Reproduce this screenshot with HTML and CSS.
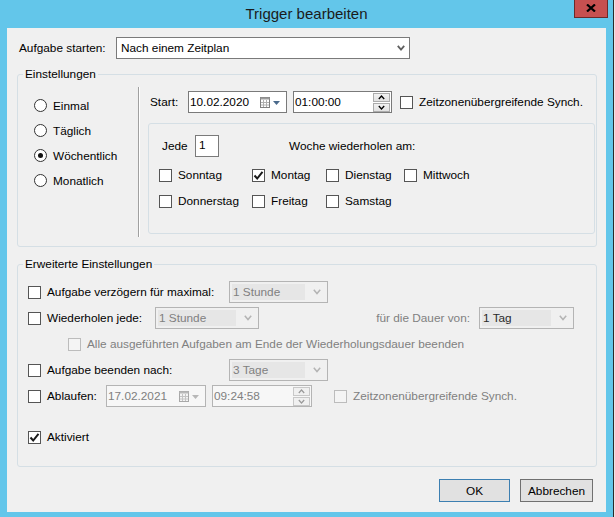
FILE: index.html
```html
<!DOCTYPE html>
<html lang="de">
<head>
    <meta charset="UTF-8">
    <meta name="viewport" content="width=device-width, initial-scale=1.0">
    <title>Trigger bearbeiten</title>
    <link rel="stylesheet" href="styles.css">
</head>
<body>
    <div class="window">
        <div class="titlebar">
            <span class="title">Trigger bearbeiten</span>
            <div class="close">
                <svg width="10" height="8" viewBox="0 0 10 8"><path d="M1 0.5 L9 7.5 M9 0.5 L1 7.5" stroke="#000" stroke-width="2.2"/></svg>
            </div>
        </div>

        <div class="client">
            <div class="top-row">
                <span class="top-label">Aufgabe starten:</span>
                <div class="select">
                    <span class="select-value">Nach einem Zeitplan</span>
                    <svg width="8" height="6" viewBox="0 0 8 6"><path d="M0.8 0.8 L4 4.6 L7.2 0.8" stroke="#606060" stroke-width="1.8" fill="none"/></svg>
                </div>
            </div>

            <fieldset class="group settings">
                <legend>Einstellungen</legend>
                <div class="settings-body">
                    <div class="freq">
                        <div class="radio"><span class="circle"></span>Einmal</div>
                        <div class="radio"><span class="circle"></span>Täglich</div>
                        <div class="radio"><span class="circle on"></span>Wöchentlich</div>
                        <div class="radio"><span class="circle"></span>Monatlich</div>
                    </div>
                    <div class="sep"></div>
                    <div class="schedule">
                        <div class="start-line">
                            <span class="start-text">Start:</span>
                            <div class="datebox">
                                <span class="field-value">10.02.2020</span>
                                <svg class="cal" width="21" height="11" viewBox="0 0 21 11">
                                    <rect x="0.5" y="0.5" width="9" height="10" fill="#fff" stroke="#808080"/>
                                    <rect x="0.5" y="0.5" width="9" height="2" fill="#9a9a9a"/>
                                    <path d="M3.5 3 V10 M6.5 3 V10 M1 5.5 H9 M1 8 H9" stroke="#b0b0b0"/>
                                    <path d="M13 4 H20 L16.5 8 Z" fill="#4a6a8c"/>
                                </svg>
                            </div>
                            <div class="timebox">
                                <span class="field-value">01:00:00</span>
                                <div class="spin">
                                    <span class="spin-btn"><svg width="7" height="5" viewBox="0 0 7 5"><path d="M0.8 4 L3.5 1 L6.2 4" stroke="#000" stroke-width="1.3" fill="none"/></svg></span>
                                    <span class="spin-btn"><svg width="7" height="5" viewBox="0 0 7 5"><path d="M0.8 1 L3.5 4 L6.2 1" stroke="#000" stroke-width="1.3" fill="none"/></svg></span>
                                </div>
                            </div>
                            <div class="check sync"><span class="box"></span>Zeitzonenübergreifende Synch.</div>
                        </div>

                        <div class="weekly">
                            <div class="jede-row">
                                <span class="jede-text">Jede</span>
                                <div class="numbox">1</div>
                                <span class="woche-text">Woche wiederholen am:</span>
                            </div>
                            <div class="days">
                                <div class="check"><span class="box"></span>Sonntag</div>
                                <div class="check"><span class="box checked"><svg width="11" height="11" viewBox="0 0 11 11"><path d="M1.5 5.5 L4.2 8.5 L9.5 1.8" stroke="#1a1a1a" stroke-width="2" fill="none"/></svg></span>Montag</div>
                                <div class="check"><span class="box"></span>Dienstag</div>
                                <div class="check"><span class="box"></span>Mittwoch</div>
                                <div class="check"><span class="box"></span>Donnerstag</div>
                                <div class="check"><span class="box"></span>Freitag</div>
                                <div class="check"><span class="box"></span>Samstag</div>
                            </div>
                        </div>
                    </div>
                </div>
            </fieldset>

            <fieldset class="group advanced">
                <legend>Erweiterte Einstellungen</legend>
                <div class="adv-body">
                    <div class="adv-row">
                        <div class="check w-delay"><span class="box"></span>Aufgabe verzögern für maximal:</div>
                        <div class="combo w99">
                            <span class="combo-value">1 Stunde</span>
                            <svg width="8" height="6" viewBox="0 0 8 6"><path d="M0.8 0.8 L4 4.6 L7.2 0.8" stroke="#b4b4b4" stroke-width="1.5" fill="none"/></svg>
                        </div>
                    </div>
                    <div class="adv-row">
                        <div class="check w-repeat"><span class="box"></span>Wiederholen jede:</div>
                        <div class="combo w104">
                            <span class="combo-value">1 Stunde</span>
                            <svg width="8" height="6" viewBox="0 0 8 6"><path d="M0.8 0.8 L4 4.6 L7.2 0.8" stroke="#b4b4b4" stroke-width="1.5" fill="none"/></svg>
                        </div>
                        <span class="duration-text">für die Dauer von:</span>
                        <div class="combo w95">
                            <span class="combo-value dark">1 Tag</span>
                            <svg width="8" height="6" viewBox="0 0 8 6"><path d="M0.8 0.8 L4 4.6 L7.2 0.8" stroke="#b4b4b4" stroke-width="1.5" fill="none"/></svg>
                        </div>
                    </div>
                    <div class="adv-row">
                        <div class="check disabled indent"><span class="box"></span>Alle ausgeführten Aufgaben am Ende der Wiederholungsdauer beenden</div>
                    </div>
                    <div class="adv-row">
                        <div class="check w-delay"><span class="box"></span>Aufgabe beenden nach:</div>
                        <div class="combo w99">
                            <span class="combo-value">3 Tage</span>
                            <svg width="8" height="6" viewBox="0 0 8 6"><path d="M0.8 0.8 L4 4.6 L7.2 0.8" stroke="#b4b4b4" stroke-width="1.5" fill="none"/></svg>
                        </div>
                    </div>
                    <div class="adv-row">
                        <div class="check w-expire"><span class="box"></span>Ablaufen:</div>
                        <div class="datebox off">
                            <span class="field-value">17.02.2021</span>
                            <svg class="cal" width="21" height="11" viewBox="0 0 21 11">
                                <rect x="0.5" y="0.5" width="9" height="10" fill="#f4f4f4" stroke="#a8a8a8"/>
                                <rect x="0.5" y="0.5" width="9" height="2" fill="#b8b8b8"/>
                                <path d="M3.5 3 V10 M6.5 3 V10 M1 5.5 H9 M1 8 H9" stroke="#c4c4c4"/>
                                <path d="M13 4 H20 L16.5 8 Z" fill="#b8b8b8"/>
                            </svg>
                        </div>
                        <div class="timebox off">
                            <span class="field-value">09:24:58</span>
                            <div class="spin">
                                <span class="spin-btn"><svg width="7" height="5" viewBox="0 0 7 5"><path d="M0.8 4 L3.5 1 L6.2 4" stroke="#9a9a9a" stroke-width="1.2" fill="none"/></svg></span>
                                <span class="spin-btn"><svg width="7" height="5" viewBox="0 0 7 5"><path d="M0.8 1 L3.5 4 L6.2 1" stroke="#9a9a9a" stroke-width="1.2" fill="none"/></svg></span>
                            </div>
                        </div>
                        <div class="check disabled sync-off"><span class="box"></span>Zeitzonenübergreifende Synch.</div>
                    </div>
                    <div class="adv-row active-row">
                        <div class="check"><span class="box checked"><svg width="11" height="11" viewBox="0 0 11 11"><path d="M1.5 5.5 L4.2 8.5 L9.5 1.8" stroke="#1a1a1a" stroke-width="2" fill="none"/></svg></span>Aktiviert</div>
                    </div>
                </div>
            </fieldset>

            <div class="buttons">
                <button class="btn default">OK</button>
                <button class="btn cancel">Abbrechen</button>
            </div>
        </div>
    </div>
</body>
</html>
```

FILE: styles.css
```css
* {
    box-sizing: border-box;
}

body {
    margin: 0;
    width: 615px;
    height: 517px;
    background-color: #e6e6e6;
    font-family: "Liberation Sans", Arial, sans-serif;
    font-size: 11.8px;
    color: #000;
    overflow: hidden;
}

.window {
    position: relative;
    width: 614px;
    height: 517px;
    background-color: #63c6ea;
    border-right: 1px solid #2a2a2a;
}

.titlebar {
    height: 28px;
    display: flex;
    justify-content: center;
    align-items: center;
    padding-bottom: 2px;
}

.title {
    font-size: 15px;
    color: #1b1b1b;
}

.close {
    position: absolute;
    top: 0;
    right: 5px;
    width: 34px;
    height: 18px;
    background-color: #c75050;
    border: 1px solid #6b2a2a;
    border-top: none;
    display: flex;
    justify-content: center;
    align-items: center;
    padding-bottom: 2px;
}

.client {
    margin-left: 7px;
    width: 599px;
    height: 484px;
    background-color: #f0f0f0;
    padding-top: 9px;
}

/* top row */
.top-row {
    display: flex;
    align-items: center;
    height: 22px;
    padding-left: 12px;
}

.top-label {
    width: 97px;
}

.select {
    width: 294px;
    height: 22px;
    border: 1px solid #7a7a7a;
    background-color: #fff;
    display: flex;
    align-items: center;
    padding: 0 4px 0 4px;
}

.select-value {
    flex: 1;
}

/* group boxes */
.group {
    margin: 0 0 0 10px;
    padding: 0;
    width: 580px;
    border: 1px solid #d5dfe5;
    border-radius: 3px;
    min-inline-size: 0;
}

.group legend {
    margin-left: 5px;
    padding: 0 2px;
    line-height: 14px;
    height: 14px;
}

.settings {
    margin-top: 8px;
}

.settings-body {
    display: flex;
    padding-top: 6px;
    padding-bottom: 9px;
}

.freq {
    width: 120px;
    padding-left: 16px;
    padding-top: 6px;
}

.radio {
    display: flex;
    align-items: center;
    height: 25px;
}

.circle {
    width: 13px;
    height: 13px;
    border: 1px solid #333;
    border-radius: 50%;
    background-color: #fff;
    margin-right: 6px;
    display: flex;
    justify-content: center;
    align-items: center;
}

.circle.on::after {
    content: '';
    width: 5px;
    height: 5px;
    border-radius: 50%;
    background-color: #111;
}

.sep {
    width: 2px;
    height: 150px;
    border-left: 1px solid #a0a0a0;
    border-right: 1px solid #fff;
}

.schedule {
    flex: 1;
    padding-left: 8px;
    padding-right: 1px;
}

.start-line {
    display: flex;
    align-items: center;
    height: 22px;
    margin-top: 4px;
}

.start-text {
    width: 38px;
    margin-left: 2px;
}

.datebox,
.timebox {
    width: 99px;
    height: 22px;
    border: 1px solid #7a7a7a;
    background-color: #fff;
    display: flex;
    align-items: center;
    padding-left: 1px;
}

.datebox {
    margin-right: 6px;
}

.field-value {
    flex: 1;
}

.cal {
    margin-right: 5px;
}

.spin {
    display: flex;
    flex-direction: column;
    gap: 1px;
    margin-right: 1px;
}

.spin-btn {
    width: 17px;
    height: 9px;
    border: 1px solid #acacac;
    background: linear-gradient(#f2f2f2, #e2e2e2);
    display: flex;
    justify-content: center;
    align-items: center;
}

.check {
    display: flex;
    align-items: center;
    white-space: nowrap;
}

.box {
    width: 13px;
    height: 13px;
    border: 1px solid #555;
    background-color: #fff;
    margin-right: 6px;
    display: flex;
    justify-content: center;
    align-items: center;
    flex-shrink: 0;
}

.sync {
    margin-left: 8px;
}

.weekly {
    margin-top: 10px;
    height: 111px;
    border: 1px solid #d5dfe5;
    border-radius: 3px;
    padding: 11px 0 0 10px;
}

.jede-row {
    display: flex;
    align-items: center;
    height: 22px;
    margin-left: 3px;
}

.jede-text {
    width: 33px;
}

.numbox {
    width: 24px;
    height: 22px;
    border: 1px solid #7a7a7a;
    background-color: #fff;
    padding: 2px 0 0 3px;
    align-self: stretch;
}

.woche-text {
    margin-left: 70px;
}

.days {
    display: grid;
    grid-template-columns: 93px 74px 78px auto;
    grid-auto-rows: 26px;
    margin-top: 5px;
}

/* advanced */
.advanced {
    margin-top: 10px;
}

.adv-body {
    padding: 8px 0 16px 10px;
}

.adv-row {
    display: flex;
    align-items: center;
    height: 26px;
}

.active-row {
    margin-top: 15px;
}

.w-delay {
    width: 201px;
}

.w-repeat {
    width: 127px;
}

.w-expire {
    width: 78px;
}

.combo {
    height: 22px;
    border: 1px solid #b4b4b4;
    background-color: #f0f0f0;
    display: flex;
    align-items: center;
    padding: 2px 6px 2px 2px;
}

.combo-value {
    flex: 1;
    height: 100%;
    background-color: #e6e6e6;
    color: #808080;
    line-height: 16px;
    padding-left: 1px;
    margin-right: 8px;
}

.combo-value.dark {
    color: #2a2a2a;
}

.w99 {
    width: 99px;
}

.w104 {
    width: 104px;
}

.w95 {
    width: 95px;
}

.duration-text {
    width: 211px;
    text-align: right;
    color: #808080;
    margin-right: 9px;
}

.disabled {
    color: #808080;
}

.disabled .box {
    border-color: #bcbcbc;
    background-color: #f4f4f4;
}

.indent {
    margin-left: 40px;
}

.datebox.off,
.timebox.off {
    width: 100px;
    border-color: #b4b4b4;
    background-color: #f7f7f7;
    color: #808080;
}

.spin-btn {
    flex-shrink: 0;
}

.timebox.off .spin-btn {
    border-color: #c8c8c8;
    background: #f0f0f0;
}

.sync-off {
    margin-left: 22px;
}

/* buttons */
.buttons {
    display: flex;
    justify-content: flex-end;
    gap: 10px;
    margin-top: 12px;
    padding-right: 13px;
}

.btn {
    height: 23px;
    font-family: inherit;
    font-size: inherit;
    color: #000;
    background-color: #e1e1e1;
    border: 1px solid #adadad;
    padding: 0;
}

.btn.default {
    width: 71px;
    border-color: #3c7fb1;
}

.btn.cancel {
    width: 73px;
    border-color: #707070;
}
```
